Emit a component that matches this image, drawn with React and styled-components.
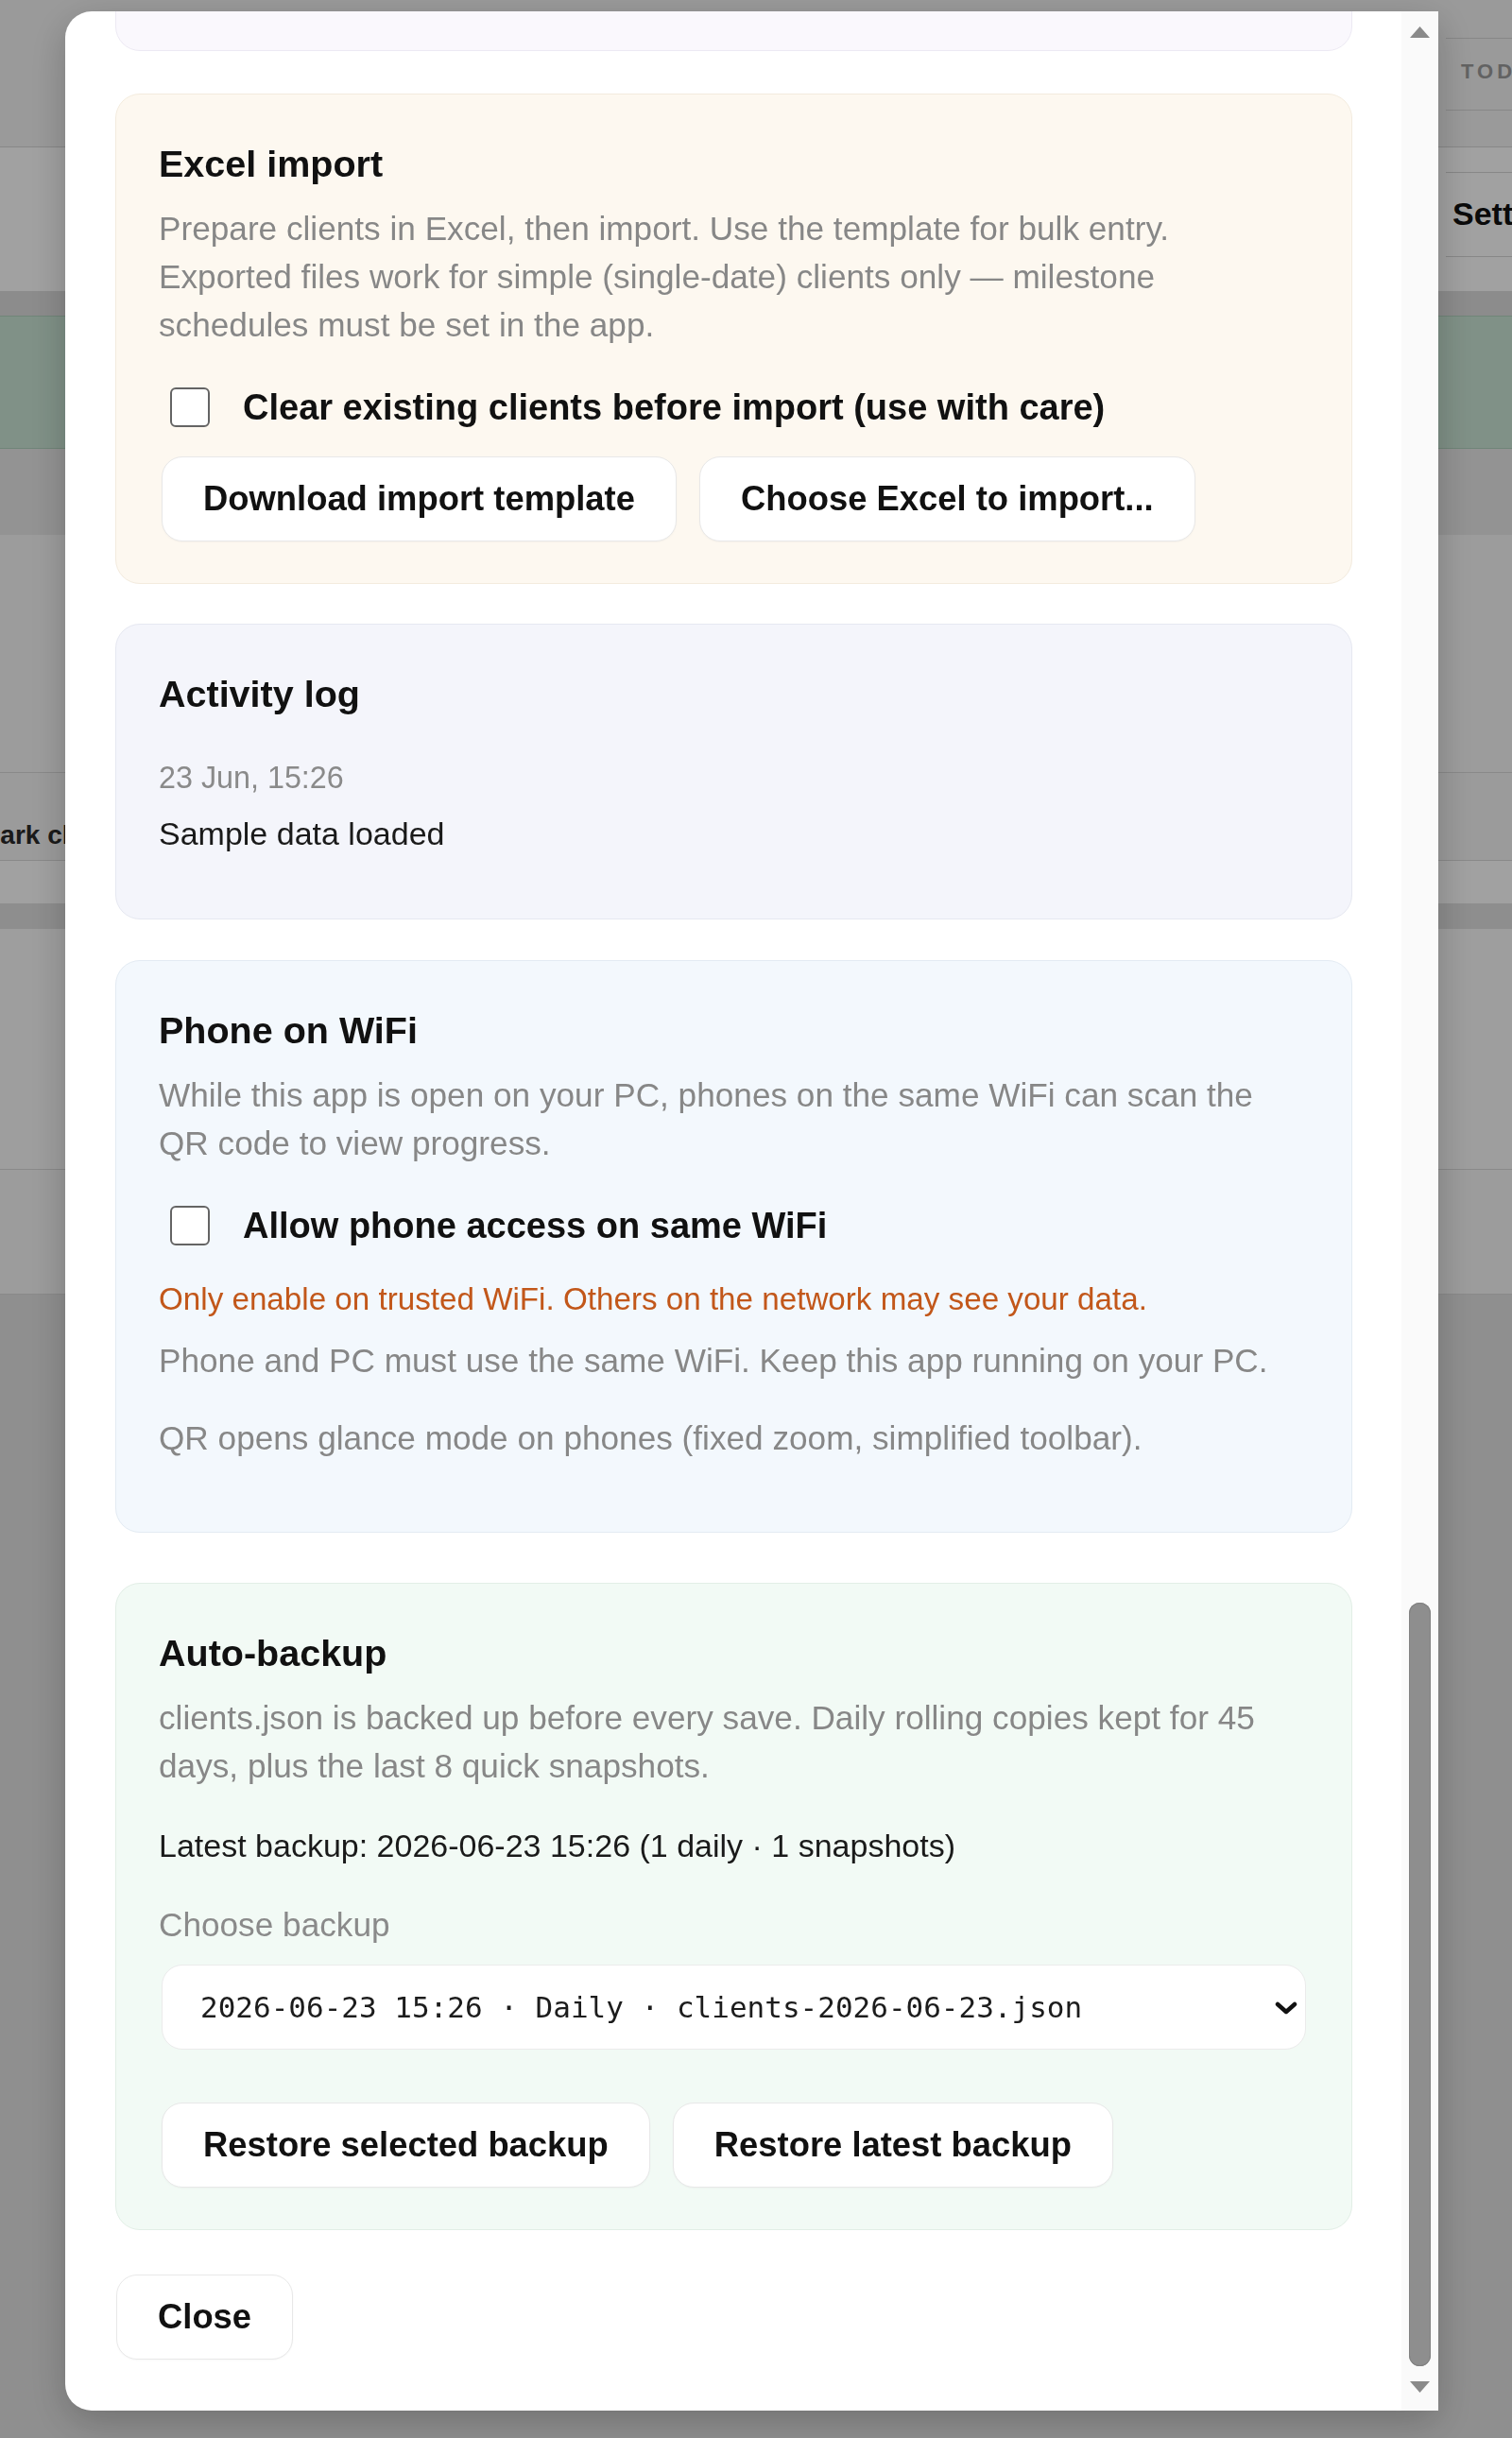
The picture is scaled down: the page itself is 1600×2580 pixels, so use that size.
import React, { useLayoutEffect, useRef } from "react";
import styled, { createGlobalStyle } from "styled-components";

const GlobalStyle = createGlobalStyle`
  html, body { margin: 0; padding: 0; }
  body {
    width: 1600px;
    height: 2580px;
    overflow: hidden;
    background: #e3e3e3;
    font-family: "Liberation Sans", Arial, sans-serif;
  }
  #root { width: 1600px; height: 2580px; overflow: hidden; }
  * { box-sizing: border-box; }
`;

/* ---------- dimmed application underneath ---------- */

const AppPage = styled.div`
  width: 1600px;
  height: 2580px;
  display: flex;
  flex-direction: column;
  background: #e3e3e3;
  overflow: hidden;
`;

const AppSheet = styled.div`
  height: 1370px;
  background: #ffffff;
  display: flex;
  flex-direction: column;
`;

const HeaderRow = styled.div`
  display: grid;
  grid-template-columns: 1530px 70px;
  height: ${(p) => p.$h}px;
  background: ${(p) => p.$bg};
  border-bottom: ${(p) => (p.$line ? "1px solid #d6d6d6" : "none")};
`;

const SideBlock = styled.div`
  margin-top: ${(p) => p.$mt}px;
  height: ${(p) => p.$h}px;
  border-top: 1px solid #d6d6d6;
  border-bottom: 1px solid #d6d6d6;
  display: flex;
  align-items: ${(p) => (p.$center ? "center" : "flex-start")};
  padding: ${(p) => p.$pad};
  overflow: hidden;
  white-space: nowrap;
`;

const SideCaps = styled.span`
  font-size: 22px;
  font-weight: 700;
  letter-spacing: 4px;
  color: #9c9c9c;
`;

const SideTitle = styled.span`
  font-size: 34px;
  font-weight: 700;
  color: #111;
`;

const Band = styled.div`
  height: ${(p) => p.$h}px;
  background: ${(p) => p.$bg};
  border-top: ${(p) => (p.$border ? `1px solid ${p.$border}` : "none")};
  border-bottom: ${(p) => (p.$border ? `1px solid ${p.$border}` : "none")};
  display: flex;
  align-items: center;
  padding-top: ${(p) => p.$pt || 0}px;
  overflow: hidden;
  white-space: nowrap;
`;

const TaskText = styled.span`
  margin-left: -23px;
  font-size: 28px;
  font-weight: 600;
  color: #2a2a2a;
`;

const Overlay = styled.div`
  position: fixed;
  inset: 0;
  background: rgba(0, 0, 0, 0.37);
`;

/* ---------- modal ---------- */

const Modal = styled.div`
  position: fixed;
  left: 69px;
  top: 12px;
  width: 1453px;
  height: 2539px;
  background: #ffffff;
  border-radius: 28px 0 0 28px;
  overflow: hidden;
  box-shadow: 0 12px 40px rgba(0, 0, 0, 0.22);
`;

const ScrollArea = styled.div`
  width: calc(100% - 39px);
  height: 100%;
  overflow-y: auto;
  scrollbar-width: none;
  &::-webkit-scrollbar { display: none; }
`;

const Stack = styled.div`
  display: flex;
  flex-direction: column;
  padding: 40px 52px 54px 53px;
`;

const tones = {
  lavender: { bg: "#faf8fd", border: "#ece9f3" },
  cream: { bg: "#fdf8f0", border: "#f3ebde" },
  slate: { bg: "#f4f5fb", border: "#e6e8f1" },
  sky: { bg: "#f3f8fd", border: "#e3ebf3" },
  mint: { bg: "#f2faf5", border: "#e2eee6" },
};

const Card = styled.section`
  margin-top: ${(p) => p.$mt || 0}px;
  background: ${(p) => tones[p.$tone].bg};
  border: 1px solid ${(p) => tones[p.$tone].border};
  border-radius: 26px;
  padding: 51px 45px 44px;
  display: flex;
  flex-direction: column;
  align-items: flex-start;
`;

const CardTitle = styled.h3`
  margin: 0;
  font-size: 39.5px;
  line-height: 45px;
  font-weight: 700;
  color: #111;
`;

const Desc = styled.p`
  margin: ${(p) => p.$mt ?? 20}px 0 0;
  max-width: 1200px;
  font-size: 35.2px;
  line-height: 51px;
  color: #878787;
`;

const Spacer = styled.div`
  height: ${(p) => p.$h}px;
`;

const Warning = styled.p`
  margin: 33px 0 0;
  font-size: 33.2px;
  line-height: 46px;
  color: #c2571a;
`;

const CheckRow = styled.label`
  margin-top: 40px;
  height: 44px;
  padding-left: 12px;
  display: flex;
  align-items: center;
  gap: 35px;
  font-size: 38px;
  font-weight: 700;
  color: #111;
`;

const Check = styled.input`
  appearance: none;
  -webkit-appearance: none;
  margin: 0;
  width: 42px;
  height: 42px;
  border: 2px solid #646464;
  border-radius: 6px;
  background: #fff;
  flex: none;
`;

const ButtonRow = styled.div`
  margin-top: ${(p) => p.$mt}px;
  padding-left: 3px;
  display: flex;
  gap: 24px;
`;

const Button = styled.button`
  height: 90px;
  padding: 0 43px;
  background: #ffffff;
  border: 1px solid #e8e8e8;
  border-radius: 22px;
  font-family: "Liberation Sans", Arial, sans-serif;
  font-size: 36.4px;
  font-weight: 700;
  color: #111;
  white-space: nowrap;
  box-shadow: 0 1px 2px rgba(0, 0, 0, 0.03);
`;

const LogDate = styled.div`
  margin-top: 43px;
  font-size: 32.3px;
  line-height: 46px;
  color: #8a8a8a;
`;

const LogText = styled.div`
  margin: 13px 0 23px;
  font-size: 34px;
  line-height: 46px;
  color: #1a1a1a;
`;

const Meta = styled.div`
  margin-top: 35px;
  font-size: 34px;
  line-height: 48px;
  color: #1a1a1a;
`;

const FieldLabel = styled.div`
  margin-top: 34px;
  font-size: 35.2px;
  line-height: 51px;
  color: #8a8a8a;
`;

const SelectWrap = styled.div`
  position: relative;
  margin: 17px 0 0 3px;
  width: calc(100% - 6px);
`;

const Select = styled.select`
  appearance: none;
  -webkit-appearance: none;
  width: 100%;
  height: 90px;
  padding: 0 70px 0 40px;
  background: #ffffff;
  border: 1px solid #ebebeb;
  border-radius: 22px;
  font-family: "DejaVu Sans Mono", "Liberation Mono", monospace;
  font-size: 31px;
  color: #1c1c1c;
`;

const Chevron = styled.svg`
  position: absolute;
  right: 9px;
  top: 39px;
  pointer-events: none;
`;

const CloseRow = styled.div`
  margin-top: 47px;
  padding-left: 1px;
  display: flex;
`;

/* ---------- fake scrollbar (overlays the modal edge) ---------- */

const Track = styled.div`
  position: absolute;
  top: 0;
  right: 0;
  bottom: 0;
  width: 39px;
  background: #fafafa;
`;

const Arrow = styled.svg`
  position: absolute;
  left: 8px;
  ${(p) => (p.$down ? "bottom: 18px;" : "top: 15px;")}
`;

const Thumb = styled.div`
  position: absolute;
  left: 8px;
  top: 1684px;
  width: 23px;
  height: 808px;
  border-radius: 12px;
  background: #8e8e8e;
  box-shadow: inset 0 0 0 1px #828282;
`;

export default function App() {
  const scrollRef = useRef(null);

  useLayoutEffect(() => {
    const el = scrollRef.current;
    if (el) el.scrollTop = el.scrollHeight;
  }, []);

  return (
    <>
      <GlobalStyle />
      <AppPage aria-hidden="true">
        <AppSheet>
          <HeaderRow $h={156} $bg="#f4f4f4" $line>
            <div />
            <SideBlock $mt={40} $h={77} $pad="22px 0 0 16px">
              <SideCaps>TODAY</SideCaps>
            </SideBlock>
          </HeaderRow>
          <HeaderRow $h={152} $bg="#ffffff">
            <div />
            <SideBlock $mt={26} $h={90} $pad="0 0 0 7px" $center>
              <SideTitle>Settings</SideTitle>
            </SideBlock>
          </HeaderRow>
          <Band $h={27} $bg="#dedede" />
          <Band $h={141} $bg="#cbe6d6" $border="#b2d3bf" />
          <Band $h={91} $bg="#e9e9e9" />
          <Band $h={251} $bg="#f8f8f8" />
          <Band $h={94} $bg="#f6f6f6" $border="#dadada" $pt={40}>
            <TaskText>Mark client</TaskText>
          </Band>
          <Band $h={45} $bg="#ffffff" />
          <Band $h={27} $bg="#e1e1e1" />
          <Band $h={255} $bg="#fbfbfb" />
          <Band $h={133} $bg="#f7f7f7" $border="#dadada" />
        </AppSheet>
      </AppPage>

      <Overlay />

      <Modal role="dialog" aria-label="Settings">
        <ScrollArea ref={scrollRef}>
          <Stack>
            <Card $tone="lavender">
              <CardTitle>Appearance</CardTitle>
              <Desc>Choose how the client board looks on this PC.</Desc>
            </Card>

            <Card $tone="cream" $mt={45}>
              <CardTitle>Excel import</CardTitle>
              <Desc>
                Prepare clients in Excel, then import. Use the template for bulk entry.
                Exported files work for simple (single-date) clients only — milestone
                schedules must be set in the app.
              </Desc>
              <CheckRow>
                <Check type="checkbox" />
                Clear existing clients before import (use with care)
              </CheckRow>
              <ButtonRow $mt={30}>
                <Button>Download import template</Button>
                <Button>Choose Excel to import...</Button>
              </ButtonRow>
            </Card>

            <Card $tone="slate" $mt={42}>
              <CardTitle>Activity log</CardTitle>
              <LogDate>23 Jun, 15:26</LogDate>
              <LogText>Sample data loaded</LogText>
            </Card>

            <Card $tone="sky" $mt={43}>
              <CardTitle>Phone on WiFi</CardTitle>
              <Desc>
                While this app is open on your PC, phones on the same WiFi can scan the
                QR code to view progress.
              </Desc>
              <CheckRow>
                <Check type="checkbox" />
                Allow phone access on same WiFi
              </CheckRow>
              <Warning>Only enable on trusted WiFi. Others on the network may see your data.</Warning>
              <Desc $mt={16}>Phone and PC must use the same WiFi. Keep this app running on your PC.</Desc>
              <Desc $mt={31}>QR opens glance mode on phones (fixed zoom, simplified toolbar).</Desc>
              <Spacer $h={30} />
            </Card>

            <Card $tone="mint" $mt={53}>
              <CardTitle>Auto-backup</CardTitle>
              <Desc>
                clients.json is backed up before every save. Daily rolling copies kept for 45
                days, plus the last 8 quick snapshots.
              </Desc>
              <Meta>Latest backup: 2026-06-23 15:26 (1 daily · 1 snapshots)</Meta>
              <FieldLabel>Choose backup</FieldLabel>
              <SelectWrap>
                <Select defaultValue="d1">
                  <option value="d1">2026-06-23 15:26 · Daily · clients-2026-06-23.json</option>
                  <option value="s1">2026-06-23 15:26 · Snapshot · clients-snap-1.json</option>
                </Select>
                <Chevron width="24" height="14" viewBox="0 0 24 14">
                  <polyline points="3,3 12,11 21,3" fill="none" stroke="#111" strokeWidth="4.5" strokeLinecap="round" strokeLinejoin="round" />
                </Chevron>
              </SelectWrap>
              <ButtonRow $mt={56}>
                <Button>Restore selected backup</Button>
                <Button>Restore latest backup</Button>
              </ButtonRow>
            </Card>

            <CloseRow>
              <Button>Close</Button>
            </CloseRow>
          </Stack>
        </ScrollArea>

        <Track aria-hidden="true">
          <Arrow width="23" height="14" viewBox="0 0 23 14">
            <polygon points="11.5,1 22,13 1,13" fill="#8a8a8a" />
          </Arrow>
          <Thumb />
          <Arrow $down width="23" height="14" viewBox="0 0 23 14">
            <polygon points="1,1 22,1 11.5,13" fill="#8a8a8a" />
          </Arrow>
        </Track>
      </Modal>
    </>
  );
}
